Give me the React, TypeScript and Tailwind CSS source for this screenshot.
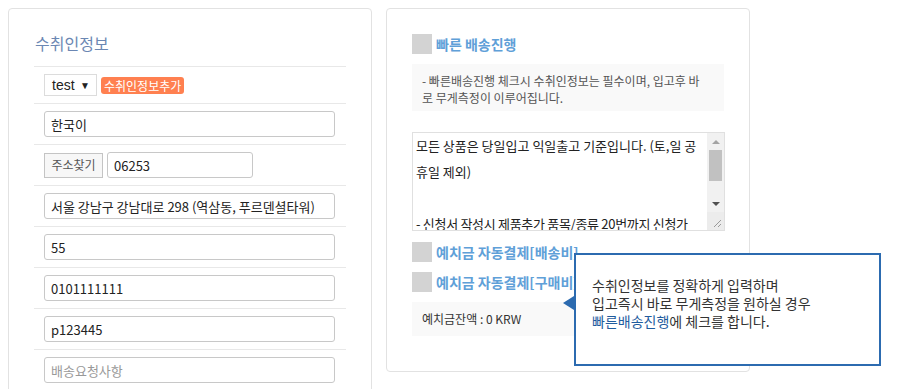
import React from 'react'

const font = { fontFamily: '"Noto Sans CJK KR", "Noto Sans", sans-serif' }

const Row = ({ children, first = false }: { children: React.ReactNode; first?: boolean }) => (
  <div className={`flex items-center gap-1 border-b border-[#e8e8e8] pl-[10px] py-[7px] ${first ? 'border-t' : ''}`}>
    {children}
  </div>
)

const Field = ({ value, placeholder, w = 'w-[291px]' }: { value?: string; placeholder?: string; w?: string }) => (
  <input
    readOnly
    defaultValue={value}
    placeholder={placeholder}
    className={`${w} h-[26px] rounded-[3px] border border-[#c8c8c8] px-[6px] text-[13px] text-[#222] placeholder:text-[#999] outline-none`}
  />
)

const Check = ({ label }: { label: string }) => (
  <div className="flex items-center gap-1 h-5">
    <span className="w-5 h-5 bg-[#d3d3d3]" />
    <span className="text-[14px] font-bold text-[#5fa0d8] whitespace-nowrap">{label}</span>
  </div>
)

// looks like a textarea with a classic scrollbar
const NoticeBox = () => (
  <div className="mt-[21px] flex w-[313px] h-[99px] border border-[#e0e0e0] bg-white">
    <div className="flex-1 overflow-hidden whitespace-nowrap pl-[3px] text-[13px] leading-[26px] text-[#222]">
      <div>모든 상품은 당일입고 익일출고 기준입니다. (토,일 공</div>
      <div>휴일 제외)</div>
      <div>&nbsp;</div>
      <div className="tracking-[-0.3px]">- 신청서 작성시 제품추가 품목/종류 20번까지 신청가</div>
    </div>
    <div className="w-[17px] flex flex-col bg-[#f1f1f1]">
      <div className="h-[17px] flex items-center justify-center">
        <span className="w-0 h-0 border-x-[4px] border-x-transparent border-b-[4px] border-b-[#a3a3a3]" />
      </div>
      <div className="mx-[2px] h-[31px] bg-[#c1c1c1]" />
      <div className="flex-1" />
      <div className="h-[17px] flex items-center justify-center">
        <span className="w-0 h-0 border-x-[4px] border-x-transparent border-t-[4px] border-t-[#505050]" />
      </div>
      <div className="h-[18px] bg-[#ececec] flex items-end justify-end p-[2px]">
        <svg width="10" height="10" viewBox="0 0 10 10">
          <path d="M2 9 L9 2 M6 9 L9 6" stroke="#9a9a9a" strokeWidth="1" fill="none" />
        </svg>
      </div>
    </div>
  </div>
)

export default function App() {
  return (
    <div className="w-[900px] h-[389px] overflow-hidden bg-white flex items-start gap-[14px] pl-2 pt-2 text-[#333]" style={font}>
      {/* 수취인정보 */}
      <div className="w-[364px] h-[400px] shrink-0 rounded-[4px] border border-[#e2e2e2] px-[25px] pt-[23px]">
        <h2 className="text-[16px] text-[#6b87b3] leading-[22px] mb-[12px] pl-[1px]">수취인정보</h2>
        <Row first>
          <div className="w-[53px] h-[22px] border border-[#dcdcdc] flex items-center justify-between pl-[7px] pr-[6px] text-[14px] text-[#222]" style={{ fontFamily: '"Liberation Sans", sans-serif' }}>
            <span>test</span>
            <span className="text-[10px]">▼</span>
          </div>
          <span className="h-[17px] rounded-[3px] bg-[#ff8050] text-white text-[12px] leading-[17px] px-[3px]">수취인정보추가</span>
        </Row>
        <Row><Field value="한국이" /></Row>
        <Row>
          <button className="h-[25px] w-[59px] border border-[#c4c4c4] bg-[#f7f7f7] text-[12px] text-[#555]">주소찾기</button>
          <Field value="06253" w="w-[146px]" />
        </Row>
        <Row><Field value="서울 강남구 강남대로 298 (역삼동, 푸르덴셜타워)" /></Row>
        <Row><Field value="55" /></Row>
        <Row><Field value="0101111111" /></Row>
        <Row><Field value="p123445" /></Row>
        <Row><Field placeholder="배송요청사항" /></Row>
      </div>

      {/* 배송 옵션 */}
      <div className="relative w-[364px] h-[364px] shrink-0 rounded-[4px] border border-[#e2e2e2] px-[25px] pt-[25px]">
        <Check label="빠른 배송진행" />
        <div className="mt-[10px] bg-[#f9f9f9] px-[10px] pt-[8px] pb-[6px] text-[12px] leading-[17px] text-[#555] h-[47px] whitespace-nowrap">
          - 빠른배송진행 체크시 수취인정보는 필수이며, 입고후 바
          <br />
          로 무게측정이 이루어집니다.
        </div>
        <NoticeBox />
        <div className="mt-[11px] flex flex-col gap-[10px]">
          <Check label="예치금 자동결제[배송비]" />
          <Check label="예치금 자동결제[구매비]" />
        </div>
        <div className="mt-[10px] h-[34px] bg-[#f9f9f9] flex items-center pl-[10px] text-[12px] text-[#333]">
          예치금잔액 : 0 KRW
        </div>

        {/* tooltip */}
        <div className="absolute left-[187px] top-[244px] w-[307px] h-[113px] border-2 border-[#2c6bb0] bg-white flex items-center pl-[16px] pb-[14px]">
          <span className="absolute -left-[13px] top-[41px] w-0 h-0 border-y-[7px] border-y-transparent border-r-[11px] border-r-[#2c6bb0]" />
          <p className="text-[14px] leading-[18px] text-[#333]">
            수취인정보를 정확하게 입력하며
            <br />
            입고즉시 바로 무게측정을 원하실 경우
            <br />
            <span className="text-[#1f5c9e]">빠른배송진행</span>에 체크를 합니다.
          </p>
        </div>
      </div>
    </div>
  )
}
